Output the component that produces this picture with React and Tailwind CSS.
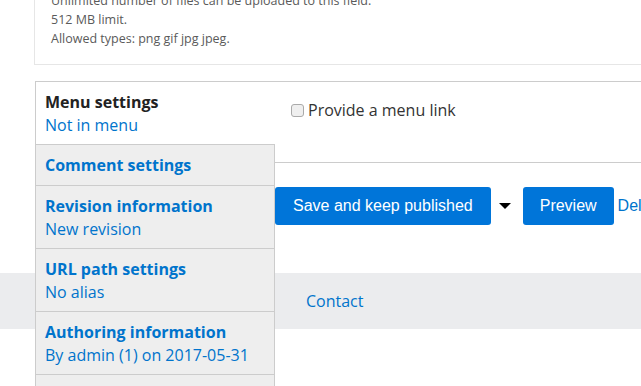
import React from 'react';

const tabs = [
    { title: 'Menu settings', summary: 'Not in menu', active: true },
    { title: 'Comment settings' },
    { title: 'Revision information', summary: 'New revision' },
    { title: 'URL path settings', summary: 'No alias' },
    { title: 'Authoring information', summary: 'By admin (1) on 2017-05-31' },
];

const VerticalTab = ({ title, summary, active }) => (
    <div
        className={
            'pl-[9px] pt-[9px] border-b border-[#ccc] leading-[23px] text-[16px] ' +
            (summary ? 'pb-[7px] ' : 'pb-[8px] ') +
            (active ? 'bg-white' : 'bg-[#eee] border-r')
        }
    >
        <div className={'font-bold ' + (active ? 'text-[#222]' : 'text-[#0074cc]')}>{title}</div>
        {summary && <div className="text-[#0074cc]">{summary}</div>}
    </div>
);

const App = () => {
    return (
        <div className="relative w-[641px] h-[386px] overflow-hidden bg-white font-['Open_Sans',sans-serif]">
            {/* file field help */}
            <div className="ml-[34px] -mt-[9px] pl-[16px] pb-[16px] border-l border-b border-[#e6e6e6] text-[12.5px] leading-[19px] text-[#5a5a5a]">
                <div>Unlimited number of files can be uploaded to this field.</div>
                <div>512 MB limit.</div>
                <div>Allowed types: png gif jpg jpeg.</div>
            </div>

            {/* vertical tabs + actions */}
            <div className="ml-[35px] mt-[16px] flex items-start border-t border-[#ccc]">
                <div className="w-[240px] h-[191px] shrink-0">
                    <div className="relative z-10 border-l border-[#ccc] bg-[#eee]">
                        {tabs.map((t) => (
                            <VerticalTab key={t.title} {...t} />
                        ))}
                        <div className="h-[40px] border-r border-[#ccc]" />
                    </div>
                </div>
                <div className="flex-1 min-w-0">
                    <div className="h-[81px] border-b border-[#ccc] pl-[16px] pt-[16px]">
                        <label className="flex items-center h-[24px] text-[16px] text-[#333]">
                            <input
                                type="checkbox"
                                className="appearance-none w-[13px] h-[13px] mr-[4px] rounded-[3px] border border-[#aaa] bg-[#efefef]"
                            />
                            Provide a menu link
                        </label>
                    </div>
                    <div className="mt-[24px] flex items-center whitespace-nowrap font-['Liberation_Sans',Arial,sans-serif] text-[16px]">
                        <button className="shrink-0 h-[38px] px-[18px] rounded-[3px] bg-[#0075d9] text-white">
                            Save and keep published
                        </button>
                        <span className="shrink-0 ml-[8px] mr-[12px] w-0 h-0 border-x-[6px] border-x-transparent border-t-[6px] border-t-black" />
                        <button className="shrink-0 h-[38px] px-[17px] rounded-[3px] bg-[#0075d9] text-white">
                            Preview
                        </button>
                        <span className="shrink-0 ml-[4px] text-[#0074cc]">Delete</span>
                    </div>
                </div>
            </div>

            {/* footer */}
            <div className="h-[56px] bg-[#ebecee] flex items-center pl-[306px] text-[16px] text-[#0074cc]">
                Contact
            </div>
        </div>
    );
};

export default App;
